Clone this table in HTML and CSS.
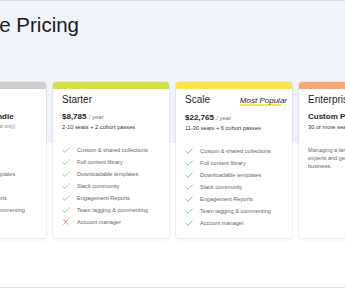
FILE: index.html
```html
<!DOCTYPE html>
<html lang="en">
<head>
<meta charset="utf-8">
<title>Simple Pricing</title>
<link rel="stylesheet" href="styles.css">
</head>
<body>
<div class="page">
  <section class="hero">
    <h1 class="title">Simple Pricing</h1>
  </section>
  <section class="plans">
    <article class="plan">
      <div class="plan-bar bar-gray"></div>
      <div class="plan-body">
        <div class="plan-head"><h2 class="plan-name">Team</h2></div>
        <p class="plan-price"><strong>Onboarding Bundle</strong></p>
        <p class="plan-seats plan-seats--muted">Up to 10 team seats (first year only)</p>
        <ul class="features">
          <li class="feature"><svg class="icon" viewBox="0 0 8 6"><path d="M0.6 3.1L2.9 5.3L7.5 0.6" fill="none" stroke="#6fc17a" stroke-width="0.8"/></svg>Cohort access</li>
          <li class="feature"><svg class="icon" viewBox="0 0 8 6"><path d="M0.6 3.1L2.9 5.3L7.5 0.6" fill="none" stroke="#6fc17a" stroke-width="0.8"/></svg>Content library</li>
          <li class="feature"><svg class="icon" viewBox="0 0 8 6"><path d="M0.6 3.1L2.9 5.3L7.5 0.6" fill="none" stroke="#6fc17a" stroke-width="0.8"/></svg>Downloadable templates</li>
          <li class="feature"><svg class="icon" viewBox="0 0 8 6"><path d="M0.6 3.1L2.9 5.3L7.5 0.6" fill="none" stroke="#6fc17a" stroke-width="0.8"/></svg>Slack community</li>
          <li class="feature"><svg class="icon" viewBox="0 0 8 6"><path d="M0.6 3.1L2.9 5.3L7.5 0.6" fill="none" stroke="#6fc17a" stroke-width="0.8"/></svg>Engagement Reports</li>
          <li class="feature"><svg class="icon" viewBox="0 0 8 6"><path d="M0.6 3.1L2.9 5.3L7.5 0.6" fill="none" stroke="#6fc17a" stroke-width="0.8"/></svg>Team tagging &amp; commenting</li>
          <li class="feature"><svg class="icon" viewBox="0 0 8 6"><path d="M1.5 0.5L6 5.5M6 0.5L1.5 5.5" fill="none" stroke="#e36a6a" stroke-width="0.8"/></svg>Account manager</li>
        </ul>
      </div>
    </article>

    <article class="plan">
      <div class="plan-bar bar-lime"></div>
      <div class="plan-body">
        <div class="plan-head"><h2 class="plan-name">Starter</h2></div>
        <p class="plan-price"><strong>$8,785</strong> <span class="per">/ year</span></p>
        <p class="plan-seats">2-10 seats + 2 cohort passes</p>
        <ul class="features">
          <li class="feature"><svg class="icon" viewBox="0 0 8 6"><path d="M0.6 3.1L2.9 5.3L7.5 0.6" fill="none" stroke="#6fc17a" stroke-width="0.8"/></svg>Custom &amp; shared collections</li>
          <li class="feature"><svg class="icon" viewBox="0 0 8 6"><path d="M0.6 3.1L2.9 5.3L7.5 0.6" fill="none" stroke="#6fc17a" stroke-width="0.8"/></svg>Full content library</li>
          <li class="feature"><svg class="icon" viewBox="0 0 8 6"><path d="M0.6 3.1L2.9 5.3L7.5 0.6" fill="none" stroke="#6fc17a" stroke-width="0.8"/></svg>Downloadable templates</li>
          <li class="feature"><svg class="icon" viewBox="0 0 8 6"><path d="M0.6 3.1L2.9 5.3L7.5 0.6" fill="none" stroke="#6fc17a" stroke-width="0.8"/></svg>Slack community</li>
          <li class="feature"><svg class="icon" viewBox="0 0 8 6"><path d="M0.6 3.1L2.9 5.3L7.5 0.6" fill="none" stroke="#6fc17a" stroke-width="0.8"/></svg>Engagement Reports</li>
          <li class="feature"><svg class="icon" viewBox="0 0 8 6"><path d="M0.6 3.1L2.9 5.3L7.5 0.6" fill="none" stroke="#6fc17a" stroke-width="0.8"/></svg>Team tagging &amp; commenting</li>
          <li class="feature"><svg class="icon" viewBox="0 0 8 6"><path d="M1.5 0.5L6 5.5M6 0.5L1.5 5.5" fill="none" stroke="#e36a6a" stroke-width="0.8"/></svg>Account manager</li>
        </ul>
      </div>
    </article>

    <article class="plan">
      <div class="plan-bar bar-yellow"></div>
      <div class="plan-body">
        <div class="plan-head"><h2 class="plan-name">Scale</h2><span class="plan-tag">Most Popular</span></div>
        <p class="plan-price"><strong>$22,765</strong> <span class="per">/ year</span></p>
        <p class="plan-seats">11-30 seats + 6 cohort passes</p>
        <ul class="features">
          <li class="feature"><svg class="icon" viewBox="0 0 8 6"><path d="M0.6 3.1L2.9 5.3L7.5 0.6" fill="none" stroke="#6fc17a" stroke-width="0.8"/></svg>Custom &amp; shared collections</li>
          <li class="feature"><svg class="icon" viewBox="0 0 8 6"><path d="M0.6 3.1L2.9 5.3L7.5 0.6" fill="none" stroke="#6fc17a" stroke-width="0.8"/></svg>Full content library</li>
          <li class="feature"><svg class="icon" viewBox="0 0 8 6"><path d="M0.6 3.1L2.9 5.3L7.5 0.6" fill="none" stroke="#6fc17a" stroke-width="0.8"/></svg>Downloadable templates</li>
          <li class="feature"><svg class="icon" viewBox="0 0 8 6"><path d="M0.6 3.1L2.9 5.3L7.5 0.6" fill="none" stroke="#6fc17a" stroke-width="0.8"/></svg>Slack community</li>
          <li class="feature"><svg class="icon" viewBox="0 0 8 6"><path d="M0.6 3.1L2.9 5.3L7.5 0.6" fill="none" stroke="#6fc17a" stroke-width="0.8"/></svg>Engagement Reports</li>
          <li class="feature"><svg class="icon" viewBox="0 0 8 6"><path d="M0.6 3.1L2.9 5.3L7.5 0.6" fill="none" stroke="#6fc17a" stroke-width="0.8"/></svg>Team tagging &amp; commenting</li>
          <li class="feature"><svg class="icon" viewBox="0 0 8 6"><path d="M0.6 3.1L2.9 5.3L7.5 0.6" fill="none" stroke="#6fc17a" stroke-width="0.8"/></svg>Account manager</li>
        </ul>
      </div>
    </article>

    <article class="plan">
      <div class="plan-bar bar-orange"></div>
      <div class="plan-body">
        <div class="plan-head"><h2 class="plan-name">Enterprise</h2></div>
        <p class="plan-price"><strong>Custom Pricing</strong></p>
        <p class="plan-seats">30 or more seats</p>
        <p class="plan-desc">Managing a large number of internal experts and getting them to grow your business.</p>
      </div>
    </article>
  </section>
</div>
</body>
</html>
```

FILE: styles.css
```css
html, body {
  margin: 0;
  padding: 0;
  overflow: hidden;
  background: #ffffff;
}

body {
  font-family: "Liberation Sans", Arial, sans-serif;
  color: #222;
}

.page {
  height: 288px;
  box-sizing: border-box;
  border-top: 1px solid #dcdcdc;
  border-bottom: 1px solid #dcdcdc;
}

.hero {
  background: #f1f3fd;
  height: 142px;
  box-sizing: border-box;
  padding-top: 12px;
}

.title {
  margin: 0 0 0 -52px;
  font-size: 20.5px;
  line-height: 24px;
  font-weight: 400;
  color: #1b1b1b;
  white-space: nowrap;
}

.plans {
  display: flex;
  gap: 7px;
  margin: -61px 0 0 -70px;
}

.plan {
  flex: 0 0 116px;
  height: 156px;
  background: #fff;
  border-radius: 3px;
  overflow: hidden;
  box-shadow: 0 0 0 1px rgba(0, 0, 0, 0.045), 0 2px 4px rgba(0, 0, 0, 0.05);
}

.plan-bar { height: 7px; }
.bar-gray { background: #cecece; }
.bar-lime { background: #d3e23b; }
.bar-yellow { background: #fce53d; }
.bar-orange { background: #f8a774; }

.plan-body {
  padding: 5px 9px 0;
}

.plan-head {
  display: flex;
  justify-content: space-between;
  align-items: baseline;
}

.plan-name {
  margin: 0;
  font-size: 10px;
  line-height: 12px;
  font-weight: 400;
  color: #1e1e1e;
  white-space: nowrap;
}

.plan-tag {
  display: inline-block;
  margin-right: -4px;
  font-size: 8px;
  line-height: 12px;
  font-style: italic;
  color: #1e1e1e;
  background: linear-gradient(#fce53d, #fce53d) no-repeat 0 9px / 88% 2px;
}

.plan-price {
  margin: 6px 0 0;
  font-size: 8px;
  line-height: 10px;
  white-space: nowrap;
}

.plan-price strong {
  font-weight: 700;
  color: #1e1e1e;
}

.per {
  font-size: 6px;
  color: #777;
}

.plan-seats {
  margin: 1px 0 0;
  font-size: 5.7px;
  line-height: 8px;
  color: #333;
  white-space: nowrap;
}

.plan-seats--muted {
  color: #8a8a8a;
  font-size: 4.8px;
}

.features {
  list-style: none;
  margin: 13px 0 0;
  padding: 0;
}

.feature {
  display: flex;
  align-items: center;
  gap: 7px;
  height: 12px;
  font-size: 5.6px;
  color: #666;
  white-space: nowrap;
}

.icon {
  flex: none;
  width: 8px;
  height: 6px;
}

.plan-desc {
  margin: 15px 0 0;
  font-size: 5.6px;
  line-height: 8px;
  color: #666;
}
```
